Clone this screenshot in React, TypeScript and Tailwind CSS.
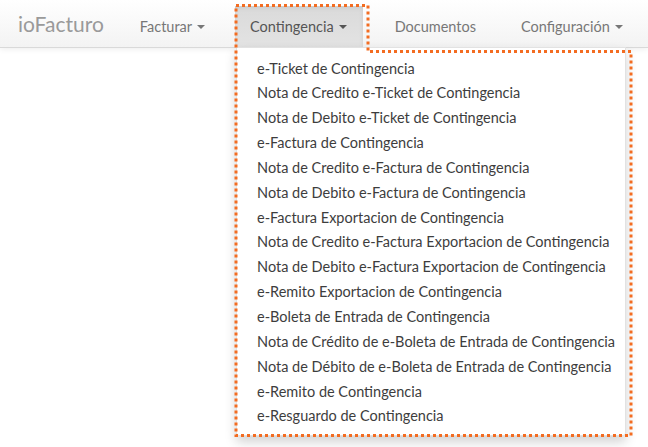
const contingenciaItems = [
  "e-Ticket de Contingencia",
  "Nota de Credito e-Ticket de Contingencia",
  "Nota de Debito e-Ticket de Contingencia",
  "e-Factura de Contingencia",
  "Nota de Credito e-Factura de Contingencia",
  "Nota de Debito e-Factura de Contingencia",
  "e-Factura Exportacion de Contingencia",
  "Nota de Credito e-Factura Exportacion de Contingencia",
  "Nota de Debito e-Factura Exportacion de Contingencia",
  "e-Remito Exportacion de Contingencia",
  "e-Boleta de Entrada de Contingencia",
  "Nota de Crédito de e-Boleta de Entrada de Contingencia",
  "Nota de Débito de e-Boleta de Entrada de Contingencia",
  "e-Remito de Contingencia",
  "e-Resguardo de Contingencia",
]

function Caret() {
  return (
    <span className="ml-[5px] inline-block h-0 w-0 border-x-[4px] border-t-[4px] border-x-transparent border-t-current align-middle" />
  )
}

export default function App() {
  return (
    <div
      className="relative h-[447px] w-[648px] overflow-hidden bg-white text-[14.5px]"
      style={{ fontFamily: "Lato, 'Open Sans', sans-serif" }}
    >
      <nav className="flex h-[48px] items-end border-b border-[#d9d9d9] bg-gradient-to-b from-white to-[#f3f3f3] shadow-[0_1px_6px_rgba(0,0,0,0.08)]">
        <a className="mb-[9px] ml-[18px] whitespace-nowrap text-[21px] leading-[28px] text-[#9a9a9a]">ioFacturo</a>
        <ul className="ml-[21px] flex items-end gap-[15px] text-[#777]">
          <li className="flex h-[41px] items-center px-[15px] pt-[1px]">
            Facturar
            <Caret />
          </li>
          <li className="relative flex h-[41px] items-center bg-gradient-to-b from-[#dadada] to-[#e3e3e3] pl-[15px] pr-[16px] pt-[1px] text-[#555] shadow-[inset_0_2px_4px_rgba(0,0,0,0.08)]">
            Contingencia
            <Caret />
            <div className="absolute left-[1px] top-[41px] z-10 w-[390px] rounded-b-[3px] border border-[#e2e2e2] bg-white pb-[6px] pt-[8px] text-[#3d3d3d] shadow-[0_6px_12px_rgba(0,0,0,0.18)]">
              {contingenciaItems.map((item) => (
                <div key={item} className="flex h-[24.85px] items-center whitespace-nowrap px-[20px]">
                  {item}
                </div>
              ))}
            </div>
          </li>
          <li className="ml-[2px] flex h-[41px] items-center px-[15px] pt-[1px]">Documentos</li>
          <li className="flex h-[41px] items-center whitespace-nowrap px-[15px] pt-[1px]">
            Configuración
            <Caret />
          </li>
        </ul>
      </nav>

      {/* annotation outline */}
      <svg className="pointer-events-none absolute left-0 top-0 z-20" width="648" height="447">
        <path
          d="M236 5.5 H368 V51.5 H631 V435.5 H236 Z"
          fill="none"
          stroke="#f36c21"
          strokeWidth="3"
          strokeDasharray="3 3"
        />
      </svg>
    </div>
  )
}
